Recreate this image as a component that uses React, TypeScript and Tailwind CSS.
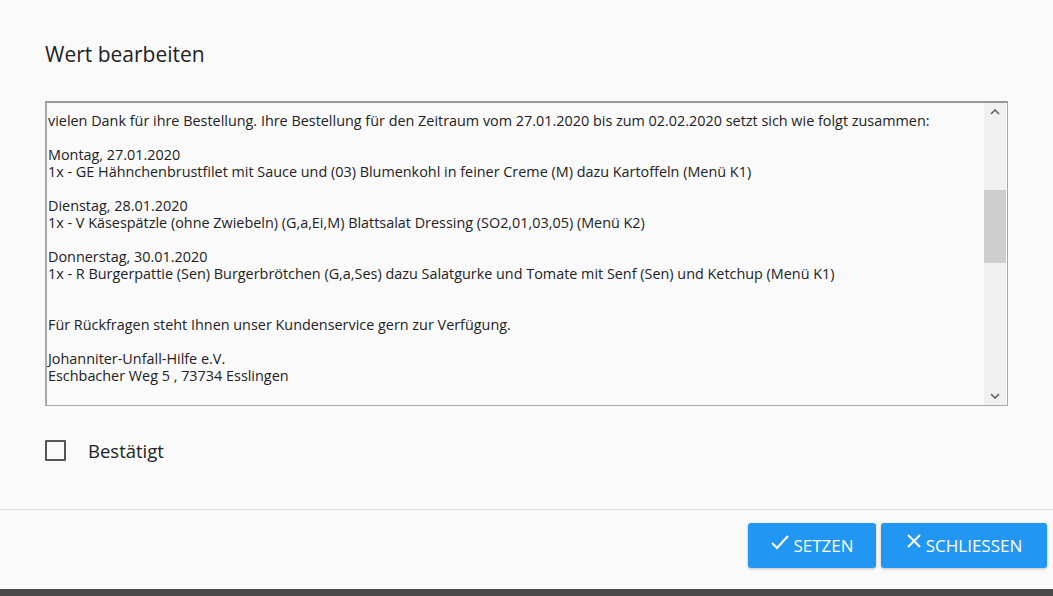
export default function App() {
  const text = `vielen Dank für ihre Bestellung. Ihre Bestellung für den Zeitraum vom 27.01.2020 bis zum 02.02.2020 setzt sich wie folgt zusammen:

Montag, 27.01.2020
1x - GE Hähnchenbrustfilet mit Sauce und (03) Blumenkohl in feiner Creme (M) dazu Kartoffeln (Menü K1)

Dienstag, 28.01.2020
1x - V Käsespätzle (ohne Zwiebeln) (G,a,Ei,M) Blattsalat Dressing (SO2,01,03,05) (Menü K2)

Donnerstag, 30.01.2020
1x - R Burgerpattie (Sen) Burgerbrötchen (G,a,Ses) dazu Salatgurke und Tomate mit Senf (Sen) und Ketchup (Menü K1)


Für Rückfragen steht Ihnen unser Kundenservice gern zur Verfügung.

Johanniter-Unfall-Hilfe e.V.
Eschbacher Weg 5 , 73734 Esslingen`;
  return (
    <div className="w-[1053px] h-[596px] bg-[#fafafa] flex flex-col text-[#222]" style={{ fontFamily: '"Open Sans", "Noto Sans", sans-serif' }}>
      <div className="h-[589px] flex flex-col">
        <div className="px-[45px] pt-[40px] text-[21px] leading-[28px]">Wert bearbeiten</div>
        <div className="mx-[45px] mt-[33px] h-[305px] border border-[#a8a8a8] border-t-2 border-t-[#999] border-l-2 border-l-[#aaa] flex bg-[#fafafa]">
          <div className="flex-1 pl-[1px] pt-[9px] text-[14.4px] leading-[17px] whitespace-pre-wrap overflow-hidden">{text}</div>
          <div className="w-[22px] mr-[1px] bg-[#f0f0f0] flex flex-col items-center justify-between py-[6px] relative">
            <svg width="10" height="6" viewBox="0 0 10 6"><path d="M1 5 L5 1 L9 5" stroke="#606060" strokeWidth="1.6" fill="none" /></svg>
            <div className="absolute left-0 right-0 top-[87px] h-[73px] bg-[#cdcdcd]" />
            <svg width="10" height="6" viewBox="0 0 10 6"><path d="M1 1 L5 5 L9 1" stroke="#606060" strokeWidth="1.6" fill="none" /></svg>
          </div>
        </div>
        <div className="flex items-center px-[45px] mt-[31px]">
          <div className="w-[21px] h-[21px] border-2 border-[#555] rounded-[1px]" />
          <span className="ml-[22px] text-[18.5px]">Bestätigt</span>
        </div>
        <div className="mt-[44px] border-t border-[#e0e0e0]" />
        <div className="flex justify-end gap-[5px] pr-[6px] mt-[13px]">
          <button className="w-[128px] h-[45px] bg-[#2196f3] rounded-[3px] text-white text-[17px] flex items-center justify-center gap-[3px] shadow-[0_1px_3px_rgba(0,0,0,0.25)]">
            <svg width="20" height="18" viewBox="0 0 20 18" className="-mt-[6px]"><path d="M2 10 L7 15 L18 3" stroke="white" strokeWidth="2.2" fill="none" /></svg>
            SETZEN
          </button>
          <button className="w-[166px] h-[45px] bg-[#2196f3] rounded-[3px] text-white text-[17px] flex items-center justify-center gap-[4px] shadow-[0_1px_3px_rgba(0,0,0,0.25)]">
            <svg width="16" height="16" viewBox="0 0 16 16" className="-mt-[8px]"><path d="M2 2 L14 14 M14 2 L2 14" stroke="white" strokeWidth="2" fill="none" /></svg>
            SCHLIESSEN
          </button>
        </div>
      </div>
      <div className="h-[7px] bg-[#4a4a4a]" />
    </div>
  );
}
